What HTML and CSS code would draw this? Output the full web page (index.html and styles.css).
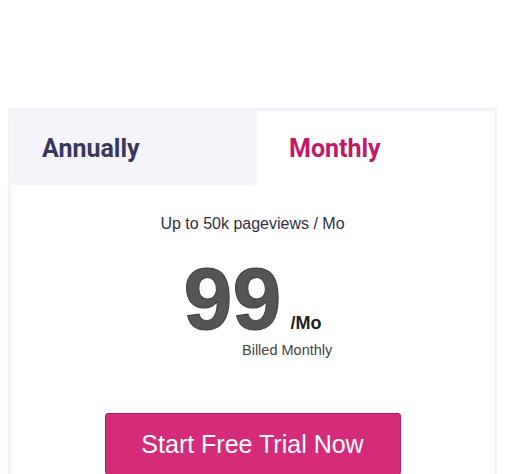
FILE: index.html
```html
<!DOCTYPE html>
<html lang="en">

<head>
   <meta charset="UTF-8">
   <meta name="viewport" content="width=device-width, initial-scale=1.0">
   <title>Pricing</title>
   <link rel="stylesheet" href="styles.css">
</head>

<body>
   <div class="pricing-card">
      <div class="tabs">
         <div class="tab tab-annual">Annually</div>
         <div class="tab tab-monthly">Monthly</div>
      </div>
      <div class="plan">
         <p class="pageviews">Up to 50k pageviews / Mo</p>
         <div class="price">
            <span class="amount">99</span>
            <span class="per">/Mo</span>
         </div>
         <p class="billed">Billed Monthly</p>
         <button class="trial-btn">Start Free Trial Now</button>
      </div>
   </div>
</body>

</html>
```

FILE: styles.css
```css
body {
   margin: 8px;
   background-color: white;
   font-family: "Liberation Sans", Arial, sans-serif;
}

div.pricing-card {
   width: 489px;
   margin-top: 100px;
   border: 3px solid #f3f2f9;
   border-bottom: none;
   box-sizing: border-box;
}

.tabs {
   display: flex;
   height: 74px;
}

.tab {
   display: flex;
   align-items: center;
   font-family: Roboto, "Noto Sans", sans-serif;
   font-weight: bold;
   font-size: 25px;
}

.tab-annual {
   width: 246px;
   padding-left: 31px;
   box-sizing: border-box;
   background-color: #f5f4fa;
   border-radius: 4px;
   color: #38365f;
}

.tab-monthly {
   flex: 1;
   padding-left: 32px;
   color: #c1186a;
}

.plan {
   text-align: center;
   padding-top: 30px;
}

p.pageviews {
   margin: 0;
   font-size: 16px;
   color: #2f2f45;
}

.price {
   display: flex;
   justify-content: center;
   align-items: baseline;
   margin-top: 30px;
}

.amount {
   font-size: 88px;
   font-weight: bold;
   line-height: 72px;
   color: #555;
   -webkit-text-stroke: 1px #3c3c3c;
}

.per {
   margin-left: 9px;
   font-size: 18px;
   font-weight: bold;
   color: #222;
}

p.billed {
   margin: 7px 0 0;
   padding-left: 231px;
   text-align: left;
   font-size: 14.5px;
   color: #444;
}

button.trial-btn {
   display: block;
   width: 296px;
   height: 62px;
   margin: 55px auto 0;
   background-color: #d42c79;
   border: 1px solid #b31c63;
   border-radius: 3px;
   color: white;
   font-family: "Liberation Sans", Arial, sans-serif;
   font-size: 25px;
}
```
